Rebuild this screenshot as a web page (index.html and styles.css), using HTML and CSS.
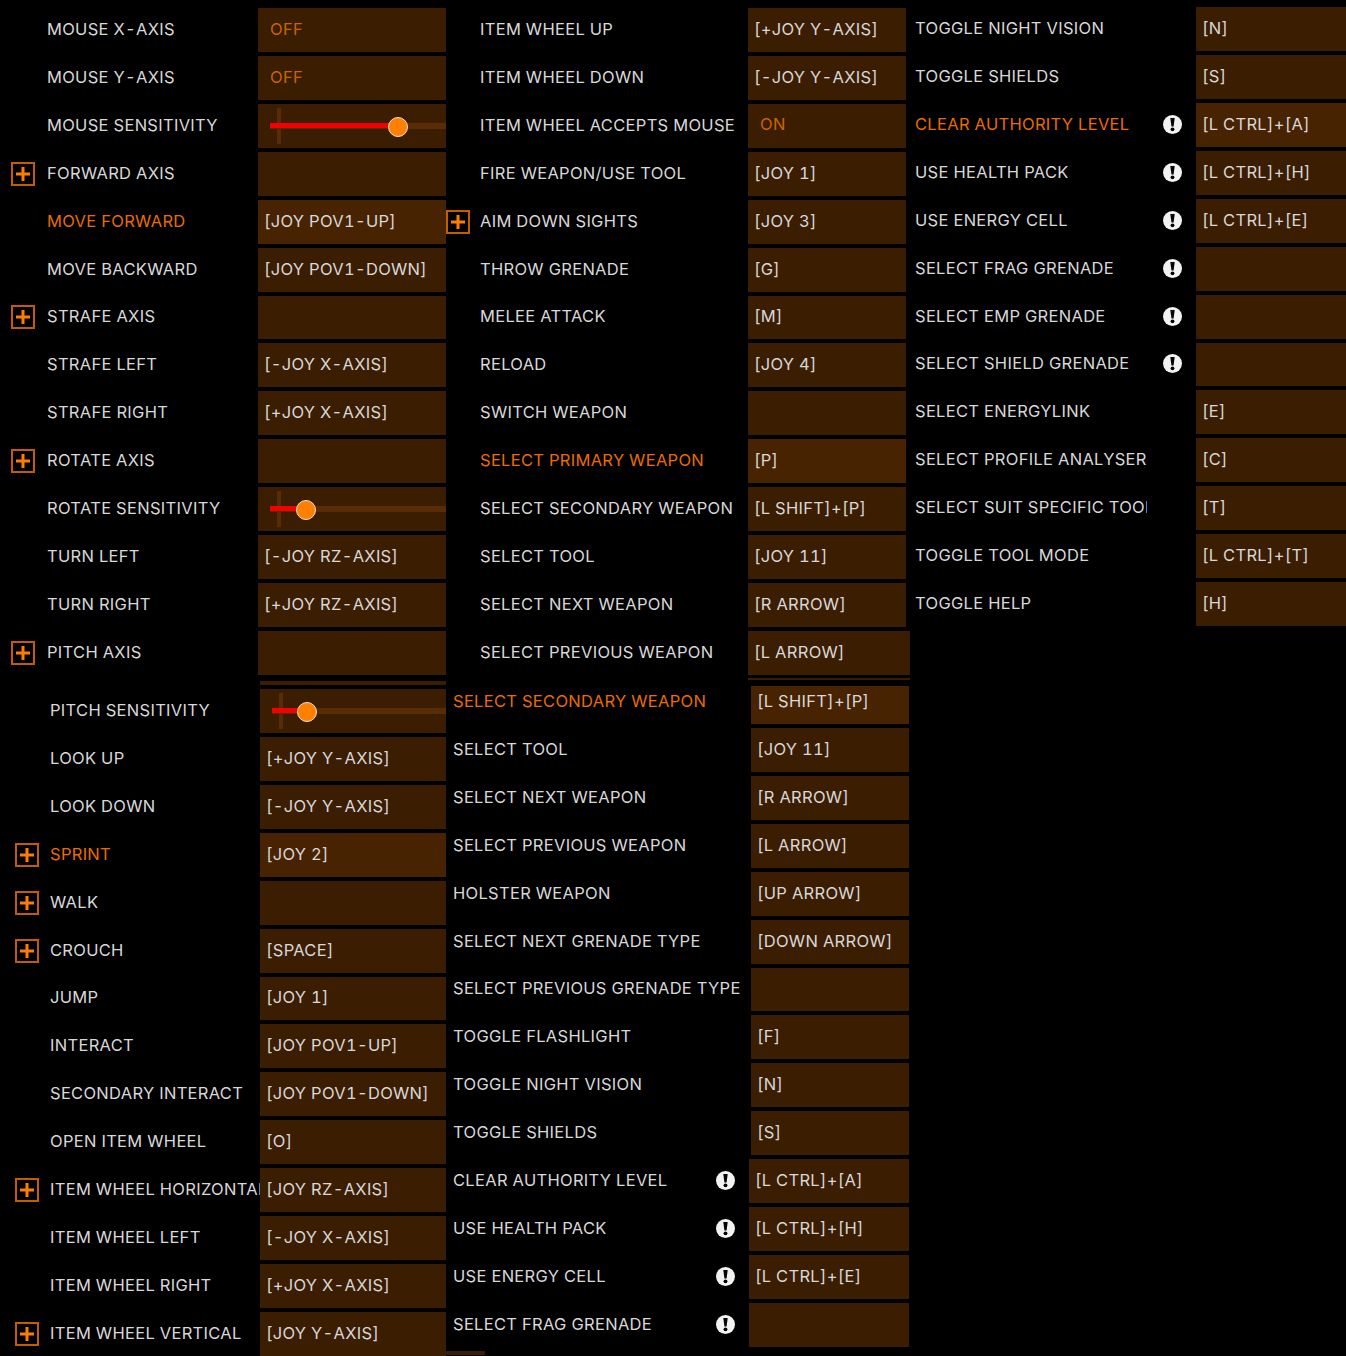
FILE: index.html
```html
<!DOCTYPE html>
<html lang="en">
<head>
<meta charset="utf-8">
<title>Controls</title>
<link rel="stylesheet" href="styles.css">
</head>
<body>
<svg class="defs" width="0" height="0" aria-hidden="true">
  <symbol id="plus" viewBox="0 0 24 24"><rect x="1" y="1" width="22" height="22" fill="none" stroke="#c45c00" stroke-width="2"/><path d="M12 5v14M5 12h14" stroke="#ff7d00" stroke-width="3" fill="none"/></symbol>
  <symbol id="warn" viewBox="0 0 18 18"><circle cx="9" cy="9" r="9" fill="#f2f2f2"/><path d="M6.9 2.8h4.2L10 10.8H8z" fill="#000"/><circle cx="9" cy="13.6" r="1.8" fill="#000"/></symbol>
</svg>
<main class="sheet">
  <div class="band band-top">
    <section class="panel p1">
      <div class="row"><span class="lead"></span><span class="label">MOUSE X-AXIS</span><span class="cell toggle">OFF</span></div>
      <div class="row"><span class="lead"></span><span class="label">MOUSE Y-AXIS</span><span class="cell toggle">OFF</span></div>
      <div class="row"><span class="lead"></span><span class="label">MOUSE SENSITIVITY</span><span class="cell slider"><i class="track"></i><i class="tick"></i><i class="fill" style="width:129px"></i></span></div>
      <div class="row"><span class="lead"><svg class="plus"><use href="#plus"/></svg></span><span class="label">FORWARD AXIS</span><span class="cell"></span></div>
      <div class="row on"><span class="lead"></span><span class="label">MOVE FORWARD</span><span class="cell">[JOY POV1-UP]</span></div>
      <div class="row"><span class="lead"></span><span class="label">MOVE BACKWARD</span><span class="cell">[JOY POV1-DOWN]</span></div>
      <div class="row"><span class="lead"><svg class="plus"><use href="#plus"/></svg></span><span class="label">STRAFE AXIS</span><span class="cell"></span></div>
      <div class="row"><span class="lead"></span><span class="label">STRAFE LEFT</span><span class="cell">[-JOY X-AXIS]</span></div>
      <div class="row"><span class="lead"></span><span class="label">STRAFE RIGHT</span><span class="cell">[+JOY X-AXIS]</span></div>
      <div class="row"><span class="lead"><svg class="plus"><use href="#plus"/></svg></span><span class="label">ROTATE AXIS</span><span class="cell"></span></div>
      <div class="row"><span class="lead"></span><span class="label">ROTATE SENSITIVITY</span><span class="cell slider"><i class="track"></i><i class="tick"></i><i class="fill" style="width:37px"></i></span></div>
      <div class="row"><span class="lead"></span><span class="label">TURN LEFT</span><span class="cell">[-JOY RZ-AXIS]</span></div>
      <div class="row"><span class="lead"></span><span class="label">TURN RIGHT</span><span class="cell">[+JOY RZ-AXIS]</span></div>
      <div class="row"><span class="lead"><svg class="plus"><use href="#plus"/></svg></span><span class="label">PITCH AXIS</span><span class="cell"></span></div>
    </section>
    <section class="panel p2">
      <div class="row"><span class="lead"></span><span class="label">ITEM WHEEL UP</span><span class="cell">[+JOY Y-AXIS]</span></div>
      <div class="row"><span class="lead"></span><span class="label">ITEM WHEEL DOWN</span><span class="cell">[-JOY Y-AXIS]</span></div>
      <div class="row"><span class="lead"></span><span class="label">ITEM WHEEL ACCEPTS MOUSE</span><span class="cell toggle">ON</span></div>
      <div class="row"><span class="lead"></span><span class="label">FIRE WEAPON/USE TOOL</span><span class="cell">[JOY 1]</span></div>
      <div class="row"><span class="lead"><svg class="plus"><use href="#plus"/></svg></span><span class="label">AIM DOWN SIGHTS</span><span class="cell">[JOY 3]</span></div>
      <div class="row"><span class="lead"></span><span class="label">THROW GRENADE</span><span class="cell">[G]</span></div>
      <div class="row"><span class="lead"></span><span class="label">MELEE ATTACK</span><span class="cell">[M]</span></div>
      <div class="row"><span class="lead"></span><span class="label">RELOAD</span><span class="cell">[JOY 4]</span></div>
      <div class="row"><span class="lead"></span><span class="label">SWITCH WEAPON</span><span class="cell"></span></div>
      <div class="row on"><span class="lead"></span><span class="label">SELECT PRIMARY WEAPON</span><span class="cell">[P]</span></div>
      <div class="row"><span class="lead"></span><span class="label">SELECT SECONDARY WEAPON</span><span class="cell">[L SHIFT]+[P]</span></div>
      <div class="row"><span class="lead"></span><span class="label">SELECT TOOL</span><span class="cell">[JOY 11]</span></div>
      <div class="row"><span class="lead"></span><span class="label">SELECT NEXT WEAPON</span><span class="cell">[R ARROW]</span></div>
      <div class="row wide"><span class="lead"></span><span class="label">SELECT PREVIOUS WEAPON</span><span class="cell">[L ARROW]</span></div>
      <div class="sliver"></div>
    </section>
    <section class="panel p3">
      <div class="row"><span class="label">TOGGLE NIGHT VISION</span><span class="cell">[N]</span></div>
      <div class="row"><span class="label">TOGGLE SHIELDS</span><span class="cell">[S]</span></div>
      <div class="row on"><span class="label">CLEAR AUTHORITY LEVEL</span><svg class="alert"><use href="#warn"/></svg><span class="cell">[L CTRL]+[A]</span></div>
      <div class="row"><span class="label">USE HEALTH PACK</span><svg class="alert"><use href="#warn"/></svg><span class="cell">[L CTRL]+[H]</span></div>
      <div class="row"><span class="label">USE ENERGY CELL</span><svg class="alert"><use href="#warn"/></svg><span class="cell">[L CTRL]+[E]</span></div>
      <div class="row"><span class="label">SELECT FRAG GRENADE</span><svg class="alert"><use href="#warn"/></svg><span class="cell"></span></div>
      <div class="row"><span class="label">SELECT EMP GRENADE</span><svg class="alert"><use href="#warn"/></svg><span class="cell"></span></div>
      <div class="row"><span class="label">SELECT SHIELD GRENADE</span><svg class="alert"><use href="#warn"/></svg><span class="cell"></span></div>
      <div class="row"><span class="label">SELECT ENERGYLINK</span><span class="cell">[E]</span></div>
      <div class="row"><span class="label">SELECT PROFILE ANALYSER</span><span class="cell">[C]</span></div>
      <div class="row"><span class="label">SELECT SUIT SPECIFIC TOOL</span><span class="cell">[T]</span></div>
      <div class="row"><span class="label">TOGGLE TOOL MODE</span><span class="cell">[L CTRL]+[T]</span></div>
      <div class="row"><span class="label">TOGGLE HELP</span><span class="cell">[H]</span></div>
    </section>
  </div>
  <div class="band band-bottom">
    <section class="panel b1">
      <div class="sliver"></div>
      <div class="row"><span class="lead"></span><span class="label">PITCH SENSITIVITY</span><span class="cell slider"><i class="track"></i><i class="tick"></i><i class="fill" style="width:36px"></i></span></div>
      <div class="row"><span class="lead"></span><span class="label">LOOK UP</span><span class="cell">[+JOY Y-AXIS]</span></div>
      <div class="row"><span class="lead"></span><span class="label">LOOK DOWN</span><span class="cell">[-JOY Y-AXIS]</span></div>
      <div class="row on"><span class="lead"><svg class="plus"><use href="#plus"/></svg></span><span class="label">SPRINT</span><span class="cell">[JOY 2]</span></div>
      <div class="row"><span class="lead"><svg class="plus"><use href="#plus"/></svg></span><span class="label">WALK</span><span class="cell"></span></div>
      <div class="row"><span class="lead"><svg class="plus"><use href="#plus"/></svg></span><span class="label">CROUCH</span><span class="cell">[SPACE]</span></div>
      <div class="row"><span class="lead"></span><span class="label">JUMP</span><span class="cell">[JOY 1]</span></div>
      <div class="row"><span class="lead"></span><span class="label">INTERACT</span><span class="cell">[JOY POV1-UP]</span></div>
      <div class="row"><span class="lead"></span><span class="label">SECONDARY INTERACT</span><span class="cell">[JOY POV1-DOWN]</span></div>
      <div class="row"><span class="lead"></span><span class="label">OPEN ITEM WHEEL</span><span class="cell">[O]</span></div>
      <div class="row"><span class="lead"><svg class="plus"><use href="#plus"/></svg></span><span class="label">ITEM WHEEL HORIZONTAL</span><span class="cell">[JOY RZ-AXIS]</span></div>
      <div class="row"><span class="lead"></span><span class="label">ITEM WHEEL LEFT</span><span class="cell">[-JOY X-AXIS]</span></div>
      <div class="row"><span class="lead"></span><span class="label">ITEM WHEEL RIGHT</span><span class="cell">[+JOY X-AXIS]</span></div>
      <div class="row"><span class="lead"><svg class="plus"><use href="#plus"/></svg></span><span class="label">ITEM WHEEL VERTICAL</span><span class="cell">[JOY Y-AXIS]</span></div>
    </section>
    <section class="panel b2">
      <div class="row on cut"><span class="label">SELECT SECONDARY WEAPON</span><span class="cell">[L SHIFT]+[P]</span></div>
      <div class="row"><span class="label">SELECT TOOL</span><span class="cell">[JOY 11]</span></div>
      <div class="row"><span class="label">SELECT NEXT WEAPON</span><span class="cell">[R ARROW]</span></div>
      <div class="row"><span class="label">SELECT PREVIOUS WEAPON</span><span class="cell">[L ARROW]</span></div>
      <div class="row"><span class="label">HOLSTER WEAPON</span><span class="cell">[UP ARROW]</span></div>
      <div class="row"><span class="label">SELECT NEXT GRENADE TYPE</span><span class="cell">[DOWN ARROW]</span></div>
      <div class="row"><span class="label">SELECT PREVIOUS GRENADE TYPE</span><span class="cell"></span></div>
      <div class="row"><span class="label">TOGGLE FLASHLIGHT</span><span class="cell">[F]</span></div>
      <div class="row"><span class="label">TOGGLE NIGHT VISION</span><span class="cell">[N]</span></div>
      <div class="row"><span class="label">TOGGLE SHIELDS</span><span class="cell">[S]</span></div>
      <div class="row warned"><span class="label">CLEAR AUTHORITY LEVEL</span><svg class="alert"><use href="#warn"/></svg><span class="cell">[L CTRL]+[A]</span></div>
      <div class="row warned"><span class="label">USE HEALTH PACK</span><svg class="alert"><use href="#warn"/></svg><span class="cell">[L CTRL]+[H]</span></div>
      <div class="row warned"><span class="label">USE ENERGY CELL</span><svg class="alert"><use href="#warn"/></svg><span class="cell">[L CTRL]+[E]</span></div>
      <div class="row warned"><span class="label">SELECT FRAG GRENADE</span><svg class="alert"><use href="#warn"/></svg><span class="cell"></span></div>
      <div class="tail"></div>
    </section>
  </div>
</main>
</body>
</html>
```
FILE: styles.css
```css
* { box-sizing: border-box; }
html, body { margin: 0; background: #000; }
body {
  width: 1346px;
  height: 1356px;
  overflow: hidden;
  font-family: "Inter", "Liberation Sans", sans-serif;
  font-size: 16.5px;
  font-weight: 400;
  letter-spacing: 0.3px;
  font-variant-numeric: tabular-nums;
  color: #d8d8d8;
}
.defs { position: absolute; }
.sheet { display: flex; flex-direction: column; }
.band { display: flex; align-items: flex-start; }
.band-top { height: 681px; }
.band-bottom { padding-top: 0.3px; }
.panel { display: flex; flex-direction: column; gap: 4px; flex: none; }

.row { display: flex; align-items: center; height: 43.88px; flex: none; }
.lead { flex: none; display: flex; align-items: center; }
.label {
  flex: 1 1 0;
  min-width: 0;
  overflow: hidden;
  white-space: nowrap;
  line-height: 20px;
  position: relative;
  top: -1px;
}
.cell {
  flex: none;
  height: 43.88px;
  margin-left: auto;
  padding: 0 0 2px 6px;
  display: flex;
  align-items: center;
  white-space: nowrap;
  background: #3b1d02;
  letter-spacing: 0.3px;
}
.row.on .label { color: #e96c00; }
.row.on .cell { background: #482302; }
.toggle { padding: 0 0 3px 12px; color: #c96400; }

.plus { display: block; width: 24px; height: 24px; }
.alert { flex: none; width: 19px; height: 19px; margin-bottom: 1px; }

.slider { position: relative; padding: 0; }
.track { position: absolute; left: 12px; right: 0; top: 19px; height: 6px; background: #5a2c05; }
.tick { position: absolute; left: 19px; top: 4px; width: 4px; height: 36px; background: #5a2c05; }
.fill { position: absolute; left: 12px; top: 19px; height: 5px; background: #f50000; }
.fill::after {
  content: "";
  position: absolute;
  right: -9px;
  top: -6.5px;
  width: 18px;
  height: 18px;
  border-radius: 50%;
  background: #ff8000;
  border: 1.5px solid #f0e2d0;
}

.sliver { height: 4px; flex: none; background: #3b1d02; }

.p1 { width: 446px; padding: 8.3px 0 0 11px; }
.p1 .lead { width: 36px; }
.p1 .cell { width: 188px; }

.p2 { width: 464px; padding: 8.3px 4px 0 0; }
.p2 .lead { width: 34px; }
.p2 .cell { width: 158px; }
.p2 .row.wide .cell { width: 162px; margin-right: -4px; }
.p2 .sliver { height: 2px; width: 162px; margin: -1px -4px 0 auto; }

.p3 { width: 436px; padding: 7.4px 0 0 5px; }
.p3 .label { flex: none; width: 232px; }
.p3 .alert { margin-left: 16px; }
.p3 .cell { width: 150px; }

.b1 { width: 446px; padding-left: 15px; }
.b1 .lead { width: 35px; }
.b1 .cell { width: 186px; }
.b1 .sliver { width: 186px; margin-left: auto; }

.b2 { width: 464px; padding-left: 7px; }
.b2 .cell { width: 158px; }
.b2 .row { width: 456px; }
.b2 .row.warned .alert { margin-right: 14px; }
.b2 .row.warned .cell { width: 160px; }
.b2 .cut { margin-top: -1px; }
.b2 .cut .cell { height: 38px; margin-top: 6px; padding-bottom: 8px; }
.tail { width: 39px; height: 4px; margin: 0 0 0 -7px; background: #3b1d02; }
```
